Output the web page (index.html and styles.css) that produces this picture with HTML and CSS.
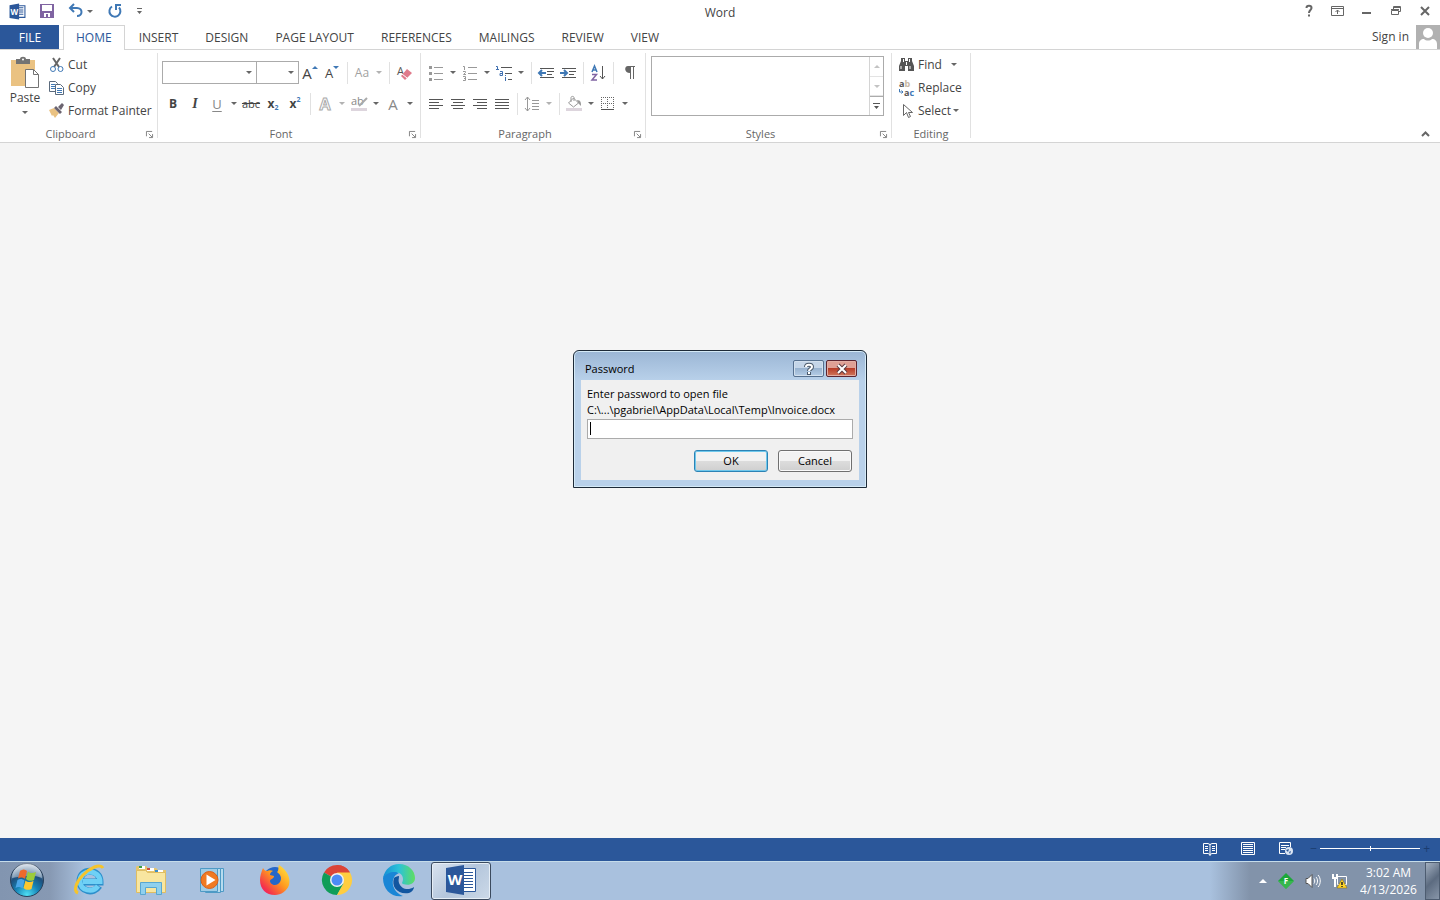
FILE: index.html
```
<!DOCTYPE html>
<html lang="en">
<head>
    <meta charset="UTF-8">
    <meta name="viewport" content="width=device-width, initial-scale=1.0">
    <title>Word</title>
    <link rel="stylesheet" href="styles.css">
</head>
<body>
    <div class="desktop">
        <header class="titlebar">
            <div class="quick-access">
                <svg class="word-logo" width="17" height="17" viewBox="0 0 32 32" aria-hidden="true">
                    <path fill="#fff" stroke="#2b579a" stroke-width="2" d="M17 5h13v22H17z"/>
                    <path stroke="#2b579a" stroke-width="2" d="M18 9h9M18 13h9M18 17h9M18 21h9"/>
                    <path fill="#2b579a" d="M1 4l18-3v30L1 28z"/>
                    <text x="10" y="22" text-anchor="middle" class="logo-letter">W</text>
                </svg>
                <button class="qa-btn qa-save" aria-label="Save">
                    <svg width="14" height="14" viewBox="0 0 14 14"><path fill="#8064a2" fill-rule="evenodd" d="M0 0h14v14H0zM2 1v6h10V1zM4 9v4h2v-3h2v3h2V9z"/></svg>
                </button>
                <button class="qa-btn qa-undo" aria-label="Undo">
                    <svg width="16" height="14" viewBox="0 0 16 14"><path fill="none" stroke="#3f78b5" stroke-width="2" d="M6 0L2 4l4 4M2 4h7c3 0 4.500 2 4.500 4S12 12 9 12"/></svg>
                </button>
                <span class="arrow"></span>
                <button class="qa-btn qa-redo" aria-label="Repeat">
                    <svg width="14" height="14" viewBox="0 0 14 14"><path fill="none" stroke="#3f78b5" stroke-width="2" d="M4 2.500A5.500 5.500 0 1 0 11 3.500M8 6V1H13"/></svg>
                </button>
                <button class="qa-btn qa-more" aria-label="Customize Quick Access Toolbar">
                    <svg width="7" height="6" viewBox="0 0 7 6"><path fill="#666" d="M1 0h5v1H1zM1 3h5L3.500 6z"/></svg>
                </button>
            </div>
            <h1 class="app-title">Word</h1>
            <div class="window-buttons">
                <button aria-label="Help"><svg width="14" height="14" viewBox="0 0 14 14"><path fill="none" stroke="#666" stroke-width="2" d="M4.500 4c0-3 5-3 5 0 0 2-2.500 2-2.500 5M7 10.500v2"/></svg></button>
                <button aria-label="Ribbon Display Options"><svg width="14" height="14" viewBox="0 0 14 14"><path fill="none" stroke="#666" d="M.5 2.500h12v9H.5zM.5 4.500h12M6.500 10V6M4.500 8l2-2 2 2"/></svg></button>
                <button aria-label="Minimize"><svg width="14" height="14" viewBox="0 0 14 14"><path fill="#666" d="M2 8h9v2H2z"/></svg></button>
                <button aria-label="Restore"><svg width="14" height="14" viewBox="0 0 14 14"><path fill="none" stroke="#666" d="M2.500 6.500h7v4h-7zM2 5.500h8M4.500 5V2.500h7v5h-2M4 3.500h8"/></svg></button>
                <button aria-label="Close"><svg width="14" height="14" viewBox="0 0 14 14"><path fill="none" stroke="#666" stroke-width="2" d="M3 3l8 8M11 3l-8 8"/></svg></button>
            </div>
        </header>

        <nav class="tabs">
            <button class="tab tab-file">FILE</button>
            <button class="tab tab-active">HOME</button>
            <button class="tab">INSERT</button>
            <button class="tab">DESIGN</button>
            <button class="tab">PAGE LAYOUT</button>
            <button class="tab">REFERENCES</button>
            <button class="tab">MAILINGS</button>
            <button class="tab">REVIEW</button>
            <button class="tab">VIEW</button>
            <a class="sign-in" href="#">Sign in
                <svg width="24" height="24" viewBox="0 0 24 24" aria-hidden="true"><path fill="#b1b1b1" d="M0 0h24v24H0z"/><circle cx="12" cy="8" r="5" fill="#fff"/><path fill="#fff" d="M3 24v-5c0-3 2-5 5-5 2 2 6 2 8 0 3 0 5 2 5 5v5z"/></svg>
            </a>
        </nav>

        <section class="ribbon">
            <div class="group group-clipboard">
                <div class="group-body">
                    <button class="paste">
                        <svg width="30" height="31" viewBox="0 0 30 31"><path fill="#eac282" d="M1 3h24v26H1z"/><path fill="#737373" d="M6 2h4c0-3 6-3 6 0h4v5H6z"/><circle cx="13" cy="2.500" r="1" fill="#fff"/><path fill="#fff" stroke="#737373" d="M15.500 12.500h8l5 5v13h-13z"/><path fill="none" stroke="#737373" d="M23.500 12.500v5h5"/></svg>
                        Paste
                        <span class="arrow"></span>
                    </button>
                    <div class="commands">
                        <button class="command"><svg width="16" height="16" viewBox="0 0 16 16"><path stroke="#666" stroke-width="2" d="M4 1l6 9M11 1L5 10"/><circle cx="4" cy="12" r="2.500" fill="#fff" stroke="#3f78b5"/><circle cx="11.500" cy="12" r="2.500" fill="#fff" stroke="#3f78b5"/></svg>Cut</button>
                        <button class="command"><svg width="16" height="16" viewBox="0 0 16 16"><path fill="#fff" stroke="#5b6b7d" d="M.5 1.500h6l2 2v8h-8z"/><path stroke="#3f78b5" d="M2 4.500h4M2 6.500h4M2 8.500h4"/><path fill="#fff" stroke="#5b6b7d" d="M6.500 4.500h5l3 3v7h-8z"/><path stroke="#3f78b5" d="M8 8.500h5M8 10.500h5M8 12.500h5"/></svg>Copy</button>
                        <button class="command"><svg width="16" height="16" viewBox="0 0 16 16"><path fill="#eac282" d="M0 7l5-2 5 5-4 5-2-3-1 1z"/><path fill="#6b6470" d="M5 5l2-2 6 6-2 2zM9 4l4-4 2 2-3 5z"/></svg>Format Painter</button>
                    </div>
                </div>
                <div class="group-label">Clipboard<button class="launcher" aria-label="Clipboard options"><svg width="8" height="8" viewBox="0 0 8 8"><path fill="none" stroke="#777" d="M.5 6V.5H7M3 3l4 4M7.500 3.500v4h-4"/></svg></button></div>
            </div>

            <div class="group group-font">
                <div class="group-body tool-rows">
                    <div class="tools">
                        <span class="combo combo-font"><select aria-label="Font"><option></option></select></span>
                        <span class="combo combo-size"><select aria-label="Font size"><option></option></select></span>
                        <button class="tool tool-grow" aria-label="Increase font size">A<i class="up"></i></button>
                        <button class="tool tool-shrink" aria-label="Decrease font size">A<i class="down"></i></button>
                        <span class="divider"></span>
                        <button class="tool faded">Aa</button><span class="arrow faded"></span>
                        <span class="divider"></span>
                        <button class="tool" aria-label="Clear formatting"><svg width="16" height="16" viewBox="0 0 16 16"><text x="1" y="10" class="icon-text">A</text><path fill="#e07a8b" d="M11 4l5 4-7 7-4-4z"/><path stroke="#fff" d="M6 9l5 4"/></svg></button>
                    </div>
                    <div class="tools">
                        <button class="tool bold">B</button>
                        <button class="tool italic">I</button>
                        <button class="tool underline">U</button><span class="arrow"></span>
                        <button class="tool strike">abc</button>
                        <button class="tool bold">x<sub>2</sub></button>
                        <button class="tool bold">x<sup>2</sup></button>
                        <span class="divider"></span>
                        <button class="tool outline" aria-label="Text effects">A</button><span class="arrow faded"></span>
                        <button class="tool" aria-label="Highlight"><svg width="16" height="16" viewBox="0 0 16 16"><text x="0" y="9" class="icon-text icon-gray">ab</text><path stroke="#aaa" stroke-width="2" d="M16 2L8 10"/><path fill="#ddd5dd" d="M0 12h16v3H0z"/></svg></button><span class="arrow"></span>
                        <button class="tool font-color">A</button><span class="arrow"></span>
                    </div>
                </div>
                <div class="group-label">Font<button class="launcher" aria-label="Font options"><svg width="8" height="8" viewBox="0 0 8 8"><path fill="none" stroke="#777" d="M.5 6V.5H7M3 3l4 4M7.500 3.500v4h-4"/></svg></button></div>
            </div>

            <div class="group group-paragraph">
                <div class="group-body tool-rows">
                    <div class="tools">
                        <button class="tool" aria-label="Bullets"><svg width="14" height="16" viewBox="0 0 14 16"><path fill="#999" d="M0 1h3v3H0zM0 7h3v3H0zM0 13h3v3H0z"/><path stroke="#999" d="M5 2.500h9M5 8.500h9M5 14.500h9"/></svg></button><span class="arrow"></span>
                        <button class="tool" aria-label="Numbering"><svg width="14" height="16" viewBox="0 0 14 16"><path fill="none" stroke="#999" d="M0 1.500h1.500V5M0 6.500h2.500v1L.5 9.500H3M0 11.500h2.500v4H0M1 13.500h1M5 2.500h9M5 8.500h9M5 14.500h9"/></svg></button><span class="arrow"></span>
                        <button class="tool" aria-label="Multilevel list"><svg width="18" height="16" viewBox="0 0 18 16"><path fill="none" stroke="#3f6fb0" stroke-width="1" d="M1 1.500h1.500V5M1 4.500h3M5 6.500h2.500v4H5v-2h2M10.500 12v4M10.500 10v1"/><path stroke="#555" d="M6 2.500h11M10 8.500h7M13 14.500h4"/></svg></button><span class="arrow"></span>
                        <span class="divider"></span>
                        <button class="tool" aria-label="Decrease indent"><svg width="16" height="12" viewBox="0 0 16 12"><path stroke="#555" d="M2 1.500h14M9 4.500h7M9 7.500h5M2 10.500h14"/><path fill="none" stroke="#3f78b5" stroke-width="2" d="M8 6H1M4 3L1 6l3 3"/></svg></button>
                        <button class="tool" aria-label="Increase indent"><svg width="16" height="12" viewBox="0 0 16 12"><path stroke="#555" d="M2 1.500h14M9 4.500h7M9 7.500h5M2 10.500h14"/><path fill="none" stroke="#3f78b5" stroke-width="2" d="M0 6h7M4 3l3 3-3 3"/></svg></button>
                        <span class="divider"></span>
                        <button class="tool" aria-label="Sort"><svg width="14" height="16" viewBox="0 0 14 16"><path fill="none" stroke="#3f78b5" stroke-width="1.500" d="M1 7l2.500-6L6 7M2 5h3"/><path fill="none" stroke="#8064a2" stroke-width="1.500" d="M1 9.500h4.500L1 15h5"/><path fill="none" stroke="#555" d="M11.500 1v13M9 11l2.500 3 2.500-3"/></svg></button>
                        <span class="divider"></span>
                        <button class="tool tool-pilcrow" aria-label="Show paragraph marks"><svg width="10" height="13" viewBox="0 0 10 13"><path fill="#666" d="M3 0h7v1H9v12H8V1H6v12H5V7C-1 7-1 0 3 0z"/></svg></button>
                    </div>
                    <div class="tools">
                        <button class="tool" aria-label="Align left"><svg width="14" height="11" viewBox="0 0 14 11"><path stroke="#555" d="M0 1.500h14M0 4.500h10M0 7.500h14M0 10.500h10"/></svg></button>
                        <button class="tool" aria-label="Center"><svg width="14" height="11" viewBox="0 0 14 11"><path stroke="#555" d="M0 1.500h14M2 4.500h10M0 7.500h14M2 10.500h10"/></svg></button>
                        <button class="tool" aria-label="Align right"><svg width="14" height="11" viewBox="0 0 14 11"><path stroke="#555" d="M0 1.500h14M4 4.500h10M0 7.500h14M4 10.500h10"/></svg></button>
                        <button class="tool" aria-label="Justify"><svg width="14" height="11" viewBox="0 0 14 11"><path stroke="#555" d="M0 1.500h14M0 4.500h14M0 7.500h14M0 10.500h14"/></svg></button>
                        <span class="divider"></span>
                        <button class="tool" aria-label="Line spacing"><svg width="14" height="16" viewBox="0 0 14 16"><path fill="none" stroke="#999" d="M2.500 1v14M0 4l2.500-3L5 4M0 12l2.500 3L5 12M7 4.500h7M7 7.500h7M7 10.500h7M7 13.500h7"/></svg></button><span class="arrow faded"></span>
                        <span class="divider"></span>
                        <button class="tool" aria-label="Shading"><svg width="16" height="16" viewBox="0 0 16 16"><path fill="none" stroke="#999" d="M2.500 7l5-5 5 5-5 4zM5 6V1.500C5 0 8 0 8 1.500V5"/><path fill="#999" d="M11 4c4 0 4 3 4 6l-3-3z"/><path fill="#ddd5dd" d="M0 12h16v3H0z"/></svg></button><span class="arrow"></span>
                        <button class="tool" aria-label="Borders"><svg width="14" height="14" viewBox="0 0 14 14"><path fill="none" stroke="#666" stroke-dasharray="1 1" d="M0 .5h13M0 6.500h13M.5 0v13M6.500 0v13M12.500 0v13"/><path stroke="#555" d="M0 12.500h13"/></svg></button><span class="arrow"></span>
                    </div>
                </div>
                <div class="group-label">Paragraph<button class="launcher" aria-label="Paragraph options"><svg width="8" height="8" viewBox="0 0 8 8"><path fill="none" stroke="#777" d="M.5 6V.5H7M3 3l4 4M7.500 3.500v4h-4"/></svg></button></div>
            </div>

            <div class="group group-styles">
                <div class="group-body">
                    <div class="gallery">
                        <div class="gallery-scroll">
                            <button class="faded" aria-label="Previous row"><i class="up"></i></button>
                            <button class="faded" aria-label="Next row"><i class="down"></i></button>
                            <button class="gallery-more" aria-label="More styles"><svg width="7" height="6" viewBox="0 0 7 6"><path fill="#555" d="M0 0h7v1H0zM1 3h5L3.500 6z"/></svg></button>
                        </div>
                    </div>
                </div>
                <div class="group-label">Styles<button class="launcher" aria-label="Styles options"><svg width="8" height="8" viewBox="0 0 8 8"><path fill="none" stroke="#777" d="M.5 6V.5H7M3 3l4 4M7.500 3.500v4h-4"/></svg></button></div>
            </div>

            <div class="group group-editing">
                <div class="group-body">
                    <div class="commands">
                        <button class="command command-find"><svg width="16" height="16" viewBox="0 0 16 16"><path fill="#555" d="M2 1h4v3h3V1h4v3l2 5v5H9V9H6v5H0V9l2-5z"/><path stroke="#fff" d="M2 9v3M11 9v3M7.500 5v3M4.500 2v3M10.500 2v3"/></svg>Find<span class="arrow"></span></button>
                        <button class="command"><svg width="16" height="16" viewBox="0 0 16 16"><text x="0" y="7" class="icon-text icon-small">a<tspan class="icon-tan">b</tspan></text><text x="5" y="16" class="icon-text icon-small">a<tspan class="icon-blue">c</tspan></text><path fill="none" stroke="#3f78b5" d="M.5 9v3H4M2.500 10.500L4 12l-1.500 1.500"/></svg>Replace</button>
                        <button class="command"><svg width="16" height="16" viewBox="0 0 16 16"><path fill="#fff" stroke="#666" d="M4.500 1.500v11l3-3 2 5 2-1-2-4h4z"/></svg>Select<span class="arrow"></span></button>
                    </div>
                </div>
                <div class="group-label">Editing</div>
            </div>

            <button class="collapse" aria-label="Collapse the ribbon"><svg width="9" height="6" viewBox="0 0 9 6"><path fill="none" stroke="#666" stroke-width="2" d="M1 5l3.500-3.500L8 5"/></svg></button>
        </section>

        <main class="workspace">
            <form class="dialog" role="dialog" aria-labelledby="dialog-title">
                <div class="dialog-head">
                    <h2 id="dialog-title">Password</h2>
                    <button type="button" class="dialog-help" aria-label="Help"><svg width="12" height="12" viewBox="0 0 12 12"><path fill="none" stroke="#4b5a6b" stroke-width="4" d="M3 4C3 1 9 1 9 4c0 2-3 2-3 4M6 9v3"/><path fill="none" stroke="#fff" stroke-width="2" d="M3 4C3 1 9 1 9 4c0 2-3 2-3 4M6 9v2"/></svg></button>
                    <button type="button" class="dialog-close" aria-label="Close"><svg width="12" height="10" viewBox="0 0 12 10"><path stroke="#5b3a40" stroke-width="4" d="M2 1l8 8M10 1L2 9"/><path stroke="#fff" stroke-width="2" d="M2 1l8 8M10 1L2 9"/></svg></button>
                </div>
                <div class="dialog-body">
                    <label for="password">Enter password to open file<br>C:\...\pgabriel\AppData\Local\Temp\Invoice.docx</label>
                    <input type="password" id="password">
                    <div class="dialog-actions">
                        <button type="button" class="dialog-btn dialog-ok">OK</button>
                        <button type="button" class="dialog-btn">Cancel</button>
                    </div>
                </div>
            </form>
        </main>

        <footer class="statusbar">
            <button aria-label="Read Mode"><svg width="14" height="14" viewBox="0 0 14 14"><path fill="none" stroke="#fff" d="M7 2.500L5 1.500H.5v10H5l2 1 2-1h4.500v-10H9zM7 2v12M2 4.500h3M2 6.500h3M2 8.500h3M9 4.500h3M9 6.500h3M9 8.500h3"/></svg></button>
            <button aria-label="Print Layout"><svg width="14" height="14" viewBox="0 0 14 14"><path fill="none" stroke="#fff" d="M.5.5h13v12H.5zM2 2.500h10M2 4.500h10M2 6.500h10M2 8.500h10M2 10.500h10"/></svg></button>
            <button aria-label="Web Layout"><svg width="14" height="14" viewBox="0 0 14 14"><path fill="none" stroke="#fff" d="M6 11.500H.5V.5h11V5M2 3.500h8M2 5.500h5M2 7.500h4"/><circle cx="10" cy="9" r="4" fill="#dbe5f3"/><path fill="#2b579a" d="M7 8l3-1-1 3zM10 10l2-1-1 3z"/></svg></button>
            <div class="zoom">
                <span>−</span>
                <input type="range" aria-label="Zoom" min="10" max="190" value="100">
                <span>+</span>
            </div>
        </footer>

        <div class="taskbar">
            <button class="start" aria-label="Start">
                <svg width="36" height="36" viewBox="0 0 36 36">
                    <defs>
                        <radialGradient id="orb" cx=".5" cy=".95" r=".9"><stop offset="0" stop-color="#4fe0f4"/><stop offset=".4" stop-color="#1682b5"/><stop offset=".7" stop-color="#1f4f7c"/><stop offset="1" stop-color="#b8c7d8"/></radialGradient>
                    </defs>
                    <circle cx="18" cy="18" r="16.500" fill="url(#orb)" stroke="#2a3f58"/>
                    <path fill="#fff" opacity=".4" d="M3 16a15 15 0 0 1 30 0c-9-4-20-2-30 0z"/>
                    <path fill="#ee6a2c" d="M11 9c3-2 5-2 7 0l-2 8c-2-2-5-2-7-.5z"/>
                    <path fill="#9ccb3b" d="M19 9.500c2 2 5 2 8 .5l-2 8c-3 1.500-6 1-8-1z"/>
                    <path fill="#4aa6e8" d="M8.500 18c2-1.500 5-1.500 7 .5l-2 8c-2-2-5-2-7-.5z"/>
                    <path fill="#fdc72f" d="M16.500 18.500c2 2 5 2 8 .5l-2 8c-3 1.500-6 1-8-1z"/>
                </svg>
            </button>
            <button class="task" aria-label="Internet Explorer">
                <svg width="32" height="32" viewBox="0 0 32 32"><path fill="none" stroke="#2c8fcb" stroke-width="7" d="M26 22c-5 8-19 6-19-5C7 4 27 4 27 18H10"/><path fill="none" stroke="#6fd0f5" stroke-width="5" d="M25 22c-5 7-18 5-18-5C7 5 27 5 27 17.500H10"/><path fill="none" stroke="#f5c42c" stroke-width="3" d="M5 29c-5-2-2-11 5-18S27-1 30 4"/></svg>
            </button>
            <button class="task" aria-label="Windows Explorer">
                <svg width="32" height="32" viewBox="0 0 32 32"><path fill="#e5c56d" d="M1 3l1-1h9l2 2h8l2 2h8v22H1z"/><path fill="#fff" d="M4 2h6v3H4zM12 4h7v3h-7zM20 6h8v3h-8z"/><path fill="#3a9e45" d="M4 2h3v2H4z"/><path fill="#d04b3d" d="M12 4h3v2h-3z"/><path fill="#3b8ec9" d="M20 6h3v2h-3z"/><path fill="#f8e6a0" stroke="#dfbd62" d="M1.500 6.500h9l2 2h18v20h-29z"/><path fill="#8fd0ee" stroke="#58a7d1" d="M5.500 18.500h21v12h-5v-7h-11v7h-5z"/></svg>
            </button>
            <button class="task" aria-label="Windows Media Player">
                <svg width="32" height="32" viewBox="0 0 32 32"><path fill="#b7dcef" stroke="#4e9ac5" d="M13.500 4.500h13v23h-13z"/><path fill="#b7dcef" stroke="#4e9ac5" d="M8.500 4.500h15v24h-15z"/><path fill="#9fcce5" stroke="#4e9ac5" d="M3.500 4.500h17v23h-17z"/><circle cx="12.500" cy="16" r="8.500" fill="#f07a22" stroke="#d9601a"/><path fill="#fff" d="M9.500 10.500v11l9-5.500z"/></svg>
            </button>
            <button class="task" aria-label="Firefox">
                <svg width="32" height="32" viewBox="0 0 32 32">
                    <defs><linearGradient id="fox" x1="1" y1="0" x2="0" y2="1"><stop offset="0" stop-color="#fff044"/><stop offset=".45" stop-color="#ff9a1f"/><stop offset=".8" stop-color="#f5324c"/><stop offset="1" stop-color="#e31587"/></linearGradient></defs>
                    <circle cx="16" cy="15" r="12" fill="#2567c9"/>
                    <path fill="url(#fox)" d="M4 4c1 2 2 3 4 3 2-1 4-1 6 0-2 1-3 2-3 4l4 1c0 3-4 3-4 5 0 4 7 6 10 1 2-4 1-7-3-10 2-1 1-5 2-7 8 5 12 13 10 20-2 6-8 10-14 10C7 31 1 25 1 16c0-4 1-7 3-12z"/>
                </svg>
            </button>
            <button class="task" aria-label="Chrome">
                <svg width="32" height="32" viewBox="0 0 32 32"><path fill="#db4437" d="M16 16L3 8.500a15 15 0 0 1 26 0z"/><path fill="#db4437" d="M16 1a15 15 0 0 1 13 7.500H16z"/><path fill="#0f9d58" d="M3 8.500A15 15 0 0 0 16 31l6.500-11.500L16 16z"/><path fill="#ffcd40" d="M29 8.500A15 15 0 0 1 16 31l6.500-11.500L16 8.500z"/><circle cx="16" cy="16" r="7" fill="#f1f1f1"/><circle cx="16" cy="16" r="5.500" fill="#4c8bf5"/></svg>
            </button>
            <button class="task" aria-label="Edge">
                <svg width="34" height="34" viewBox="0 0 34 34">
                    <defs><linearGradient id="edge" x1="0" y1=".3" x2="1" y2=".3"><stop offset="0" stop-color="#168fd6"/><stop offset=".5" stop-color="#2bc2d8"/><stop offset="1" stop-color="#5fde60"/></linearGradient></defs>
                    <path fill="#1a86d6" d="M1 15c2-7 10-9 16-5-5 2-7 7-6 12 1 5 5 9 10 11C10 35 1 27 1 15z"/>
                    <path fill="#1256a0" d="M12 15c-3 9 4 17 15 15 3-1 5-4 5-6-6 4-13 2-15-4-1-3 0-4 0-7-2 0-4 1-5 2z"/>
                    <path fill="url(#edge)" d="M1 15C3 6 9 1 17 1c10 0 16 7 16 14 0 6-6 8-12 6-2-1 0-2 0-5 0-8-14-10-20-1z"/>
                </svg>
            </button>
            <button class="task task-active" aria-label="Word">
                <svg width="32" height="32" viewBox="0 0 32 32">
                    <path fill="#fff" stroke="#2b579a" d="M17.500 4.500h13v23h-13z"/>
                    <path stroke="#2b579a" d="M19 8.500h9M19 11.500h9M19 14.500h9M19 17.500h9M19 20.500h9M19 23.500h9"/>
                    <path fill="#2b579a" d="M1 4l18-3v30L1 28z"/>
                    <text x="10" y="21" text-anchor="middle" class="logo-letter">W</text>
                </svg>
            </button>
            <div class="tray">
                <button aria-label="Show hidden icons"><svg width="8" height="4" viewBox="0 0 8 4"><path fill="#fff" d="M0 4l4-4 4 4z"/></svg></button>
                <button aria-label="Security"><svg width="16" height="16" viewBox="0 0 16 16"><path fill="#1da83a" d="M8 0l8 8-8 8-8-8z"/><path fill="#4fc55f" d="M8 16L0 8h16z" opacity=".5"/><text x="8" y="11" text-anchor="middle" class="tray-letter">F</text></svg></button>
                <button aria-label="Volume"><svg width="16" height="14" viewBox="0 0 16 14"><path fill="#fff" stroke="#555" d="M1 4.500h2l4-4v13l-4-4H1z"/><path fill="none" stroke="#fff" d="M9 4.500c1 1 1 4 0 5M11 3c2 2 2 6 0 8M13 1c3 3 3 9 0 12"/></svg></button>
                <button aria-label="Network"><svg width="16" height="16" viewBox="0 0 16 16"><path fill="#8191a7" stroke="#fff" d="M5.500 3.500h9v8h-9z"/><path fill="none" stroke="#fff" stroke-width="2" d="M1 1v4h4V1M3 5v9"/><path fill="#ffd42a" stroke="#8a6a00" stroke-width=".5" d="M10 6l5 9H5z"/><path stroke="#222" stroke-width="1.500" d="M10 9v3M10 13v1"/></svg></button>
            </div>
            <div class="clock"><span>3:02 AM</span><span>4/13/2026</span></div>
            <button class="show-desktop" aria-label="Show desktop"></button>
        </div>
    </div>
</body>
</html>
```
FILE: styles.css
```
* {
    box-sizing: border-box;
}
body {
    margin: 0;
    font-family: "Open Sans", "Noto Sans", sans-serif;
    font-size: 12px;
    line-height: 16px;
    color: #444;
}
button, select, input {
    margin: 0;
    padding: 0;
    border: none;
    background: none;
    font: inherit;
    color: inherit;
}
h1, h2 {
    margin: 0;
    font-size: 12px;
    font-weight: normal;
}
svg {
    display: block;
    flex: none;
    overflow: visible;
}
.desktop {
    display: flex;
    flex-direction: column;
    min-height: 100vh;
    background: #fff;
}

/* Title bar */
.titlebar {
    display: grid;
    grid-template-columns: 1fr auto 1fr;
    height: 25px;
}
.quick-access {
    display: flex;
    align-items: center;
    padding: 0 0 3px 9px;
}
.qa-save {
    margin-left: 14px;
}
.qa-undo {
    margin-left: 14px;
}
.qa-redo {
    margin-left: 12px;
}
.qa-more {
    margin-left: 14px;
}
.app-title {
    padding-top: 5px;
}
.window-buttons {
    display: flex;
    justify-content: flex-end;
    gap: 15px;
    padding: 0 8px 3px 0;
}
.logo-letter {
    font: bold 15px "Open Sans", sans-serif;
    fill: #fff;
}

/* Small triangles */
.arrow {
    display: flex;
    flex: none;
    align-items: center;
    justify-content: center;
    width: 12px;
}
.arrow::after {
    content: "";
    border: 3px solid transparent;
    border-top-color: #666;
    border-bottom: none;
}
.up, .down {
    border: 3px solid transparent;
}
.up {
    border-bottom-color: #3f78b5;
    border-top: none;
}
.down {
    border-top-color: #3f78b5;
    border-bottom: none;
}
.faded {
    opacity: 0.5;
}

/* Tabs */
.tabs {
    display: flex;
    height: 25px;
    border-bottom: 1px solid #d4d4d4;
}
.tab {
    padding: 1px 13px 0 14px;
}
.tab-file {
    width: 59px;
    margin-right: 4px;
    background: #2b579a;
    color: #fff;
}
.tab-active {
    height: 25px;
    padding: 0 12px;
    border: 1px solid #d4d4d4;
    border-bottom: none;
    background: #fff;
    color: #2b579a;
}
.sign-in {
    display: flex;
    align-items: center;
    gap: 7px;
    margin-left: auto;
    color: #444;
    text-decoration: none;
}

/* Ribbon */
.ribbon {
    display: flex;
    height: 93px;
    padding: 3px 0 4px;
    border-bottom: 1px solid #d4d4d4;
}
.group {
    display: flex;
    flex-direction: column;
    border-right: 1px solid #e1e1e1;
}
.group-clipboard {
    width: 158px;
}
.group-font {
    width: 263px;
}
.group-paragraph {
    width: 225px;
}
.group-styles {
    width: 246px;
}
.group-editing {
    width: 79px;
}
.group-body {
    display: flex;
    flex: 1;
}
.group-label {
    position: relative;
    flex: none;
    height: 16px;
    padding-right: 16px;
    margin-bottom: -4px;
    text-align: center;
    font-size: 11px;
    color: #666;
}
.group-editing .group-label {
    padding: 0;
}
.launcher {
    position: absolute;
    right: 4px;
    bottom: 4px;
}
.launcher svg {
    width: 7px;
    height: 7px;
}
.paste {
    display: flex;
    flex-direction: column;
    align-items: center;
    width: 38px;
    margin-left: 6px;
    padding-top: 4px;
    gap: 2px;
}
.paste .arrow {
    height: 8px;
}
.commands {
    display: flex;
    flex-direction: column;
    padding-left: 5px;
}
.group-editing .commands {
    padding-left: 7px;
}
.command {
    display: flex;
    align-items: center;
    gap: 3px;
    height: 23px;
    white-space: nowrap;
}
.command .arrow {
    margin-left: -4px;
    height: 12px;
}
.command-find .arrow {
    margin-left: 3px;
}
.tool-rows {
    flex-direction: column;
    padding: 4px 0 0 4px;
}
.tools {
    display: flex;
    align-items: center;
    height: 31px;
}
.tool {
    display: flex;
    align-items: center;
    justify-content: center;
    width: 22px;
    height: 22px;
}
.combo {
    position: relative;
    display: flex;
    height: 23px;
}
.combo::after {
    content: "";
    position: absolute;
    right: 5px;
    top: 10px;
    border: 3px solid transparent;
    border-top-color: #666;
    border-bottom: none;
}
.combo select {
    width: 100%;
    appearance: none;
    border: 1px solid #ababab;
    border-radius: 0;
    background: #fff;
}
.combo-font {
    width: 95px;
}
.combo-size {
    width: 42px;
}
.combo-size select {
    border-left: none;
}
.divider {
    width: 8px;
    height: 22px;
    background: linear-gradient(#e1e1e1, #e1e1e1) center / 1px 100% no-repeat;
}
.tool-grow {
    font-size: 15px;
}
.tool-shrink {
    font-size: 13px;
}
.tool .up, .tool .down {
    align-self: flex-start;
    margin-top: 4px;
}
.tool-pilcrow {
    width: 26px;
}
.bold {
    font-weight: bold;
}
.bold sub, .bold sup {
    font-size: 7px;
    line-height: 8px;
    color: #3f78b5;
}
.bold sub {
    align-self: flex-end;
    margin-bottom: 3px;
}
.bold sup {
    align-self: flex-start;
    margin-top: 3px;
}
.italic {
    font-family: "Liberation Serif", serif;
    font-size: 14px;
    font-style: italic;
    font-weight: bold;
}
.underline {
    color: #888;
    font-size: 13px;
    text-decoration: underline;
    text-underline-offset: 2px;
}
.strike {
    font-size: 11px;
    text-decoration: line-through;
}
.outline {
    font-size: 16px;
    font-weight: bold;
    color: #fff;
    -webkit-text-stroke: 1px #aaa;
}
.font-color {
    font-size: 15px;
    color: #888;
}
.icon-text {
    font: 11px "Open Sans", sans-serif;
    fill: #555;
}
.icon-gray {
    fill: #888;
}
.icon-small {
    font-size: 9px;
    font-weight: bold;
}
.icon-tan {
    fill: #c9b8a4;
}
.icon-blue {
    fill: #3f78b5;
}
.gallery {
    display: flex;
    justify-content: flex-end;
    width: 233px;
    height: 60px;
    margin: 3px 0 0 5px;
    border: 1px solid #ababab;
}
.gallery-scroll {
    display: grid;
    grid-template-rows: 20px 19px 19px;
    width: 14px;
    border-left: 1px solid #d4d4d4;
}
.gallery-scroll button {
    display: flex;
    align-items: center;
    justify-content: center;
    border-bottom: 1px solid #c8c8c8;
}
.gallery-scroll .up {
    border-bottom-color: #888;
}
.gallery-scroll .down {
    border-top-color: #888;
}
.gallery-scroll .gallery-more {
    border-top: 1px solid #ababab;
    border-bottom: none;
}
.collapse {
    align-self: flex-end;
    margin: 0 10px 1px auto;
}

/* Workspace and password dialog */
.workspace {
    display: flex;
    flex: 1;
    align-items: flex-start;
    justify-content: center;
    padding-top: 207px;
    background: #f5f5f5;
}
.dialog {
    width: 294px;
    padding: 0 7px 7px;
    border: 1px solid #1d2a38;
    border-radius: 6px 6px 0 0;
    background: linear-gradient(#9bb6d5, #b9d1ea 30px, #b9d1ea);
    box-shadow: inset 0 0 0 1px #d5eaf7;
    font-size: 11px;
    color: #000;
}
.dialog-head {
    display: flex;
    align-items: center;
    gap: 2px;
    height: 29px;
    padding: 6px 2px 0 4px;
}
.dialog-head h2 {
    flex: 1;
    font-size: 11px;
}
.dialog-help, .dialog-close {
    display: flex;
    align-items: center;
    justify-content: center;
    width: 31px;
    height: 17px;
    border: 1px solid #56708f;
    border-radius: 2px;
    background: linear-gradient(#c4d5e8 50%, #98b3d0 50%, #b5cde6);
    box-shadow: inset 0 0 0 1px #d2e0ee;
}
.dialog-close {
    border-color: #5b2430;
    background: linear-gradient(#dfa095 50%, #b83d28 50%, #d0785d);
    box-shadow: inset 0 0 0 1px #e2aea4;
}
.dialog-body {
    display: flex;
    flex-direction: column;
    padding: 6px 6px 8px;
    background: #f0f0f0;
}
.dialog-body input {
    height: 20px;
    margin-top: 1px;
    border: 1px solid #ababab;
    outline: none;
    background: linear-gradient(#000, #000) 2px 2px / 1px 13px no-repeat #fff;
}
.dialog-actions {
    display: flex;
    justify-content: flex-end;
    gap: 10px;
    margin: 11px 1px 0 0;
}
.dialog-btn {
    width: 74px;
    height: 22px;
    border: 1px solid #707070;
    border-radius: 3px;
    background: linear-gradient(#f2f2f2 50%, #dddddd 50%, #cfcfcf);
    box-shadow: inset 0 0 0 1px #fafafa;
}
.dialog-ok {
    border-color: #2c83b5;
    box-shadow: inset 0 0 0 1px #6fc8ec;
}

/* Status bar */
.statusbar {
    display: flex;
    align-items: center;
    justify-content: flex-end;
    gap: 24px;
    height: 23px;
    padding: 0 10px 2px 0;
    background: #2b579a;
}
.zoom {
    display: flex;
    align-items: center;
    gap: 3px;
    margin-left: -7px;
    color: #1b3d70;
}
.zoom input {
    width: 100px;
    height: 9px;
    appearance: none;
    background: linear-gradient(#fff, #fff) center / 100% 1px no-repeat;
}
.zoom input::-webkit-slider-thumb {
    appearance: none;
    width: 1px;
    height: 5px;
    background: #fff;
}

/* Taskbar */
.taskbar {
    display: flex;
    height: 39px;
    border-top: 1px solid #c5dcea;
    background: linear-gradient(90deg, #8295b0, #8799b3 50px, #a9c1de 85px, #a9c1de calc(100% - 230px), #8293aa calc(100% - 190px), #8293aa);
    color: #fff;
}
.start {
    display: flex;
    align-items: center;
    justify-content: center;
    width: 54px;
    margin-right: 5px;
    padding-bottom: 2px;
}
.task {
    display: flex;
    align-items: center;
    justify-content: center;
    width: 60px;
    margin-right: 2px;
    padding-bottom: 2px;
}
.task-active {
    border: 1px solid #3b4a5e;
    border-radius: 3px;
    background: linear-gradient(135deg, #d9e3ef, #b4c6dc 50%, #ccd9e8);
    box-shadow: inset 0 0 0 1px #e6eef6;
}
.tray {
    display: flex;
    align-items: center;
    gap: 11px;
    margin-left: auto;
}
.tray-letter {
    font: bold 8px "Open Sans", sans-serif;
    fill: #fff;
}
.clock {
    display: flex;
    flex-direction: column;
    align-items: center;
    width: 73px;
    margin-left: 4px;
    padding-top: 2px;
    line-height: 17px;
}
.show-desktop {
    width: 15px;
    border: 1px solid #4d5c70;
    background: linear-gradient(135deg, #a3b0c0, #5c6b80 50%, #8896a9);
}
```
